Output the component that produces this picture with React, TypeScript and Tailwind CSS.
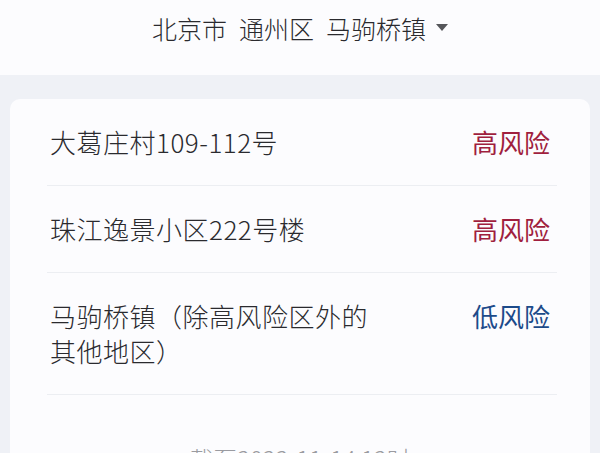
const font = { fontFamily: '"Noto Sans CJK SC", "Noto Sans", sans-serif' };

type Area = { name: string; level: '高风险' | '低风险' };

const areas: Area[] = [
  { name: '大葛庄村109-112号', level: '高风险' },
  { name: '珠江逸景小区222号楼', level: '高风险' },
  { name: '马驹桥镇（除高风险区外的其他地区）', level: '低风险' },
];

function AreaRow({ area }: { area: Area }) {
  const high = area.level === '高风险';
  return (
    <div className="flex items-start justify-between border-b border-[#eceef2] pl-[3px] pr-[7px] pt-[25px] pb-[26px]">
      <div className="max-w-[325px] text-[26px] font-light leading-[35px] tracking-[0.5px] text-[#2a2a2e]">{area.name}</div>
      <div className={high ? 'text-[26px] leading-[35px] text-[#a01f3e]' : 'text-[26px] leading-[35px] text-[#1c4b8a]'}>
        {area.level}
      </div>
    </div>
  );
}

export default function App() {
  return (
    <div className="h-[453px] w-[600px] overflow-hidden bg-[#eff1f6]" style={font}>
      <div className="flex h-[75px] items-start justify-center bg-[#fcfcfe] pt-[11px]">
        <div className="flex items-center gap-[12px] text-[25px] font-light leading-[34px] text-[#2a2a2e]">
          <span>北京市</span>
          <span>通州区</span>
          <span>马驹桥镇</span>
          <svg width="12" height="8" viewBox="0 0 12 8" className="ml-[-2px]">
            <path d="M0 0 H12 L6 7 Z" fill="#55565a" />
          </svg>
        </div>
      </div>

      <div className="mx-[10px] mt-[24px] rounded-[10px] bg-[#fcfcfe]">
        <div className="pl-[37px] pr-[33px]">
          {areas.map(a => (
            <AreaRow key={a.name} area={a} />
          ))}
        </div>
        <div className="pt-[48px] pb-[20px] text-center text-[24px] font-light leading-[32px] text-[#9a9ba0]">
          截至2022-11-14 12时
        </div>
      </div>
    </div>
  );
}
